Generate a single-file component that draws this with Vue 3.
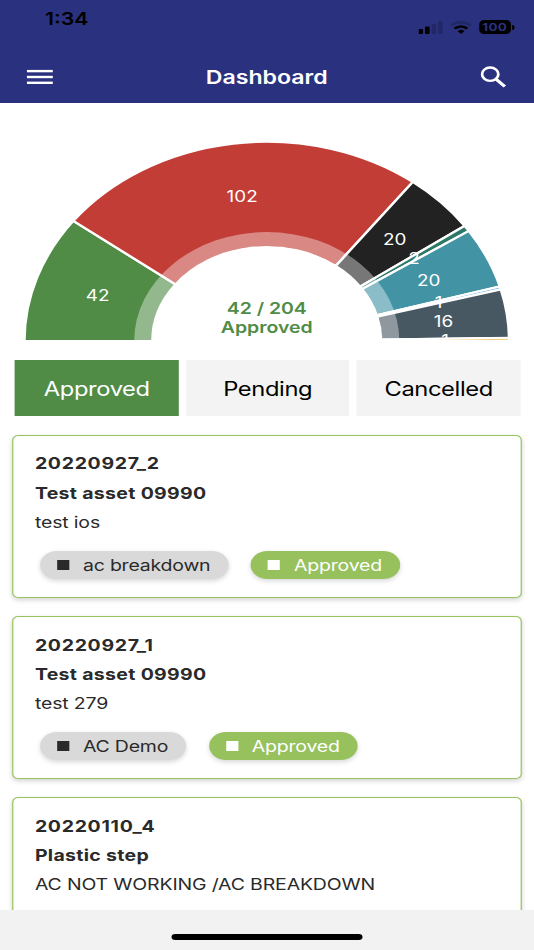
<script setup>
import { ref } from 'vue'

const tabs = ['Approved', 'Pending', 'Cancelled']
const activeTab = ref('Approved')

const statuses = [
  { count: 42, color: '#508c46' },
  { count: 102, color: '#c23d36' },
  { count: 20, color: '#222222' },
  { count: 2, color: '#2b7868' },
  { count: 20, color: '#4294a5' },
  { count: 1, color: '#6aa9e6' },
  { count: 16, color: '#485862' },
  { count: 1, color: '#f0b850' },
]

const tickets = [
  { id: '20220927_2', asset: 'Test asset 09990', note: 'test ios', type: 'ac breakdown', status: 'Approved' },
  { id: '20220927_1', asset: 'Test asset 09990', note: 'test 279', type: 'AC Demo', status: 'Approved' },
  { id: '20220110_4', asset: 'Plastic step', note: 'AC NOT WORKING /AC BREAKDOWN' },
]

// Half donut geometry
const cx = 219.3
const cy = 238
const outer = 199.3
const inner = 94
const ring = 109

function point(r, angle) {
  return `${(cx - r * Math.cos(angle)).toFixed(2)} ${(cy - r * Math.sin(angle)).toFixed(2)}`
}

function arc(from, to, r1, r2) {
  return `M${point(r1, from)} A${r1} ${r1} 0 0 1 ${point(r1, to)} L${point(r2, to)} A${r2} ${r2} 0 0 0 ${point(r2, from)} Z`
}

const total = statuses.reduce((sum, s) => sum + s.count, 0)
let start = 0
const slices = statuses.map((s) => {
  const from = (start / total) * Math.PI
  start += s.count
  const to = (start / total) * Math.PI
  const mid = (from + to) / 2
  const r = (outer + inner) / 2
  return {
    ...s,
    path: arc(from, to, outer, inner),
    x: cx - r * Math.cos(mid),
    y: cy - r * Math.sin(mid) + 6.3,
  }
})
const innerRing = arc(0, Math.PI, ring, inner + 1)
</script>

<template>
  <div class="screen">
    <header class="header">
      <div class="status-bar">
        <span class="time">1:34</span>
        <div class="indicators">
          <svg class="signal" width="20" height="13" viewBox="0 0 20 13">
            <rect x="0" y="8" width="3.8" height="5" rx="1" fill="#000" />
            <rect x="5.4" y="5.5" width="3.8" height="7.5" rx="1" fill="#000" />
            <rect x="10.8" y="3" width="3.8" height="10" rx="1" fill="#222867" />
            <rect x="16.2" y="0" width="3.8" height="13" rx="1" fill="#222867" />
          </svg>
          <svg class="wifi" width="18" height="13" viewBox="0 0 18 13" fill="none">
            <path d="M1 4.4 A11.5 11.5 0 0 1 17 4.4" stroke="#222867" stroke-width="2.6" />
            <path d="M3.8 7.7 A7.4 7.4 0 0 1 14.2 7.7" stroke="#000" stroke-width="2.6" />
            <path d="M6.2 10.2 A4 4 0 0 1 11.8 10.2 L9 13 Z" fill="#000" />
          </svg>
          <div class="battery">100</div>
        </div>
      </div>
      <nav class="navbar">
        <svg class="menu" width="21.4" height="16" viewBox="0 0 21.4 16" fill="#fff">
          <rect y="0.9" width="21.4" height="2.4" />
          <rect y="6.8" width="21.4" height="2.4" />
          <rect y="12.6" width="21.4" height="2.4" />
        </svg>
        <h1 class="title">Dashboard</h1>
        <svg class="search" width="21.4" height="22" viewBox="0 0 21.4 22" fill="none" stroke="#fff">
          <circle cx="8" cy="8.2" r="6.7" stroke-width="2.3" />
          <path d="M12.7 13 L20 20.4" stroke-width="2.9" />
        </svg>
      </nav>
    </header>

    <main class="content">
      <svg class="chart" width="439" height="238" viewBox="0 0 439 238">
        <path v-for="(s, i) in slices" :key="i" :d="s.path" :fill="s.color" stroke="#fff" stroke-width="2.2" />
        <path :d="innerRing" fill="#fff" fill-opacity="0.39" />
        <text v-for="(s, i) in slices" :key="'t' + i" :x="s.x" :y="s.y" class="count">{{ s.count }}</text>
        <text x="219.3" y="211.5" class="summary">42 / 204</text>
        <text x="219.3" y="230.5" class="summary">Approved</text>
      </svg>

      <div class="tabs">
        <button
          v-for="tab in tabs"
          :key="tab"
          class="tab"
          :class="{ active: tab === activeTab }"
          @click="activeTab = tab"
        >
          {{ tab }}
        </button>
      </div>

      <div class="list">
        <article v-for="t in tickets" :key="t.id" class="card">
          <p class="line bold id">{{ t.id }}</p>
          <p class="line bold">{{ t.asset }}</p>
          <p class="line">{{ t.note }}</p>
          <div v-if="t.status" class="pills">
            <span class="pill"><i class="square"></i>{{ t.type }}</span>
            <span class="pill approved"><i class="square"></i>{{ t.status }}</span>
          </div>
        </article>
      </div>
    </main>

    <footer class="footer"><div class="home"></div></footer>
  </div>
</template>

<style>
body {
  margin: 0;
  overflow: hidden;
}
</style>

<style scoped>
/* Laid out on a 439px wide canvas and stretched to the 534px viewport */
.screen {
  width: 439px;
  height: 950px;
  transform: scaleX(1.2164);
  transform-origin: 0 0;
  display: flex;
  flex-direction: column;
  overflow: hidden;
  background: #fff;
  color: #2a2a2a;
  font-family: Inter, 'Liberation Sans', sans-serif;
}

.header {
  height: 103px;
  flex: none;
  background: #2a317f;
}

.status-bar {
  height: 51px;
  box-sizing: border-box;
  padding: 8px 16.5px 0 37px;
  display: flex;
  justify-content: space-between;
}

.time {
  font-size: 17.5px;
  font-weight: 600;
  line-height: 22px;
  color: #000;
}

.indicators {
  display: flex;
  padding-top: 12px;
}

.signal {
  margin: 1px 6px 0 0;
}

.wifi {
  margin: 1px 6px 0 0;
}

.battery {
  position: relative;
  width: 26.5px;
  height: 14px;
  margin-right: 2.5px;
  border-radius: 4px;
  background: #000;
  color: #2a317f;
  font-size: 11px;
  font-weight: 700;
  line-height: 15.5px;
  text-align: center;
  letter-spacing: 0.3px;
}

.battery::after {
  content: '';
  position: absolute;
  right: -2.5px;
  top: 5px;
  width: 1.8px;
  height: 5px;
  border-radius: 0 2px 2px 0;
  background: #000;
}

.navbar {
  height: 52px;
  box-sizing: border-box;
  padding: 0 22.6px 0 22.2px;
  display: flex;
  align-items: center;
  justify-content: space-between;
}

.title {
  margin: 1px 0 0;
  font-size: 19px;
  font-weight: 600;
  color: #fff;
}

.content {
  flex: 1;
  min-height: 0;
  overflow: hidden;
}

.chart {
  display: block;
}

.count {
  fill: #fff;
  font-size: 15.5px;
  text-anchor: middle;
}

.summary {
  fill: #508c46;
  font-size: 16px;
  font-weight: 600;
  text-anchor: middle;
}

.tabs {
  display: flex;
  gap: 6px;
  padding: 19px 11.4px 0 12px;
}

.tab {
  flex: 1;
  height: 56px;
  padding: 2px 0 0 0.6px;
  border: none;
  background: #f3f3f3;
  color: #000;
  font-family: inherit;
  font-size: 19.5px;
  letter-spacing: -0.32px;
}

.tab.active {
  background: #508c46;
  color: #fff;
}

.list {
  display: flex;
  flex-direction: column;
  gap: 18.2px;
  padding: 19px 9.7px 0;
}

.card {
  flex: none;
  height: 163px;
  box-sizing: border-box;
  padding: 13.4px 18px 0;
  border: 1.4px solid #97c45c;
  border-radius: 5px;
  background: #fff;
  box-shadow: 0 2px 5px rgba(0, 0, 0, 0.18);
}

.line {
  margin: 0;
  font-size: 16px;
  line-height: 29.3px;
  letter-spacing: -0.12px;
  white-space: nowrap;
}

.bold {
  font-weight: 700;
  letter-spacing: 0.27px;
}

.id {
  letter-spacing: 0.58px;
}

.pills {
  display: flex;
  gap: 18.8px;
  padding: 13.4px 0 0 4px;
}

.pill {
  display: flex;
  align-items: center;
  height: 28px;
  padding: 0 14.5px 0 14px;
  border-radius: 14px;
  background: #d9d9d9;
  font-size: 16px;
  letter-spacing: -0.16px;
  box-shadow: 0 2px 5px rgba(0, 0, 0, 0.16);
}

.pill.approved {
  background: #97c15c;
  color: #fff;
}

.square {
  width: 10px;
  height: 10px;
  margin-right: 11.5px;
  background: currentColor;
}

.footer {
  flex: none;
  height: 40px;
  background: #f2f2f2;
  display: flex;
  justify-content: center;
  align-items: flex-start;
}

.home {
  width: 157px;
  height: 6px;
  margin-top: 24.4px;
  border-radius: 3px;
  background: #000;
}
</style>
